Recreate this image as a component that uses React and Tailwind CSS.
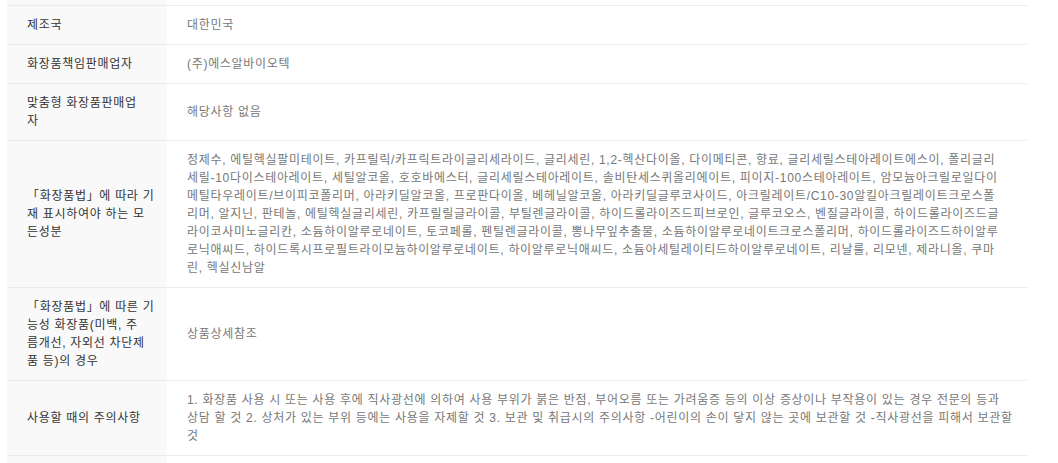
const rows = [
  { label: ['제조국'], value: ['대한민국'] },
  { label: ['화장품책임판매업자'], value: ['(주)에스알바이오텍'] },
  { label: ['맞춤형 화장품판매업', '자'], value: ['해당사항 없음'] },
  {
    label: ['「화장품법」에 따라 기', '재 표시하여야 하는 모', '든성분'],
    value: [
      '정제수, 에틸헥실팔미테이트, 카프릴릭/카프릭트라이글리세라이드, 글리세린, 1,2-헥산다이올, 다이메티콘, 향료, 글리세릴스테아레이트에스이, 폴리글리',
      '세릴-10다이스테아레이트, 세틸알코올, 호호바에스터, 글리세릴스테아레이트, 솔비탄세스퀴올리에이트, 피이지-100스테아레이트, 암모늄아크릴로일다이',
      '메틸타우레이트/브이피코폴리머, 아라키딜알코올, 프로판다이올, 베헤닐알코올, 아라키딜글루코사이드, 아크릴레이트/C10-30알킬아크릴레이트크로스폴',
      '리머, 알지닌, 판테놀, 에틸헥실글리세린, 카프릴릴글라이콜, 부틸렌글라이콜, 하이드롤라이즈드피브로인, 글루코오스, 벤질글라이콜, 하이드롤라이즈드글',
      '라이코사미노글리칸, 소듐하이알루로네이트, 토코페롤, 펜틸렌글라이콜, 뽕나무잎추출물, 소듐하이알루로네이트크로스폴리머, 하이드롤라이즈드하이알루',
      '로닉애씨드, 하이드록시프로필트라이모늄하이알루로네이트, 하이알루로닉애씨드, 소듐아세틸레이티드하이알루로네이트, 리날룰, 리모넨, 제라니올, 쿠마',
      '린, 헥실신남알',
    ],
  },
  {
    label: ['「화장품법」에 따른 기', '능성 화장품(미백, 주', '름개선, 자외선 차단제', '품 등)의 경우'],
    value: ['상품상세참조'],
  },
  {
    label: ['사용할 때의 주의사항'],
    value: [
      '1. 화장품 사용 시 또는 사용 후에 직사광선에 의하여 사용 부위가 붉은 반점, 부어오름 또는 가려움증 등의 이상 증상이나 부작용이 있는 경우 전문의 등과',
      '상담 할 것 2. 상처가 있는 부위 등에는 사용을 자제할 것 3. 보관 및 취급시의 주의사항 -어린이의 손이 닿지 않는 곳에 보관할 것 -직사광선을 피해서 보관할',
      '것',
    ],
  },
];

function Lines({ lines }) {
  return (
    <div>
      {lines.map((l, i) => (
        <div key={i} className="whitespace-nowrap">
          {l}
        </div>
      ))}
    </div>
  );
}

function Row({ label, value }) {
  return (
    <div className="flex border-b border-[#ebebeb]">
      <div className="flex w-[160px] shrink-0 items-center bg-[#f9f9f9] px-5 py-[10px] text-[#333]">
        <Lines lines={label} />
      </div>
      <div className="flex flex-1 items-center overflow-hidden px-5 py-[10px] text-[#777]">
        <Lines lines={value} />
      </div>
    </div>
  );
}

export default function App() {
  return (
    <div className="h-[463px] overflow-hidden bg-white">
      <div
        className="ml-[7px] w-[1020px] text-[12px] leading-[18px] tracking-[0.7px]"
        style={{ fontFamily: '"Liberation Sans", "Noto Sans CJK KR", sans-serif' }}
      >
        <div className="flex h-[6px] border-b border-[#ebebeb]">
          <div className="w-[160px] bg-[#f9f9f9]" />
        </div>
        {rows.map((r, i) => (
          <Row key={i} label={r.label} value={r.value} />
        ))}
        <div className="flex h-[39px] border-b border-[#ebebeb]">
          <div className="w-[160px] bg-[#f9f9f9]" />
        </div>
      </div>
    </div>
  );
}
